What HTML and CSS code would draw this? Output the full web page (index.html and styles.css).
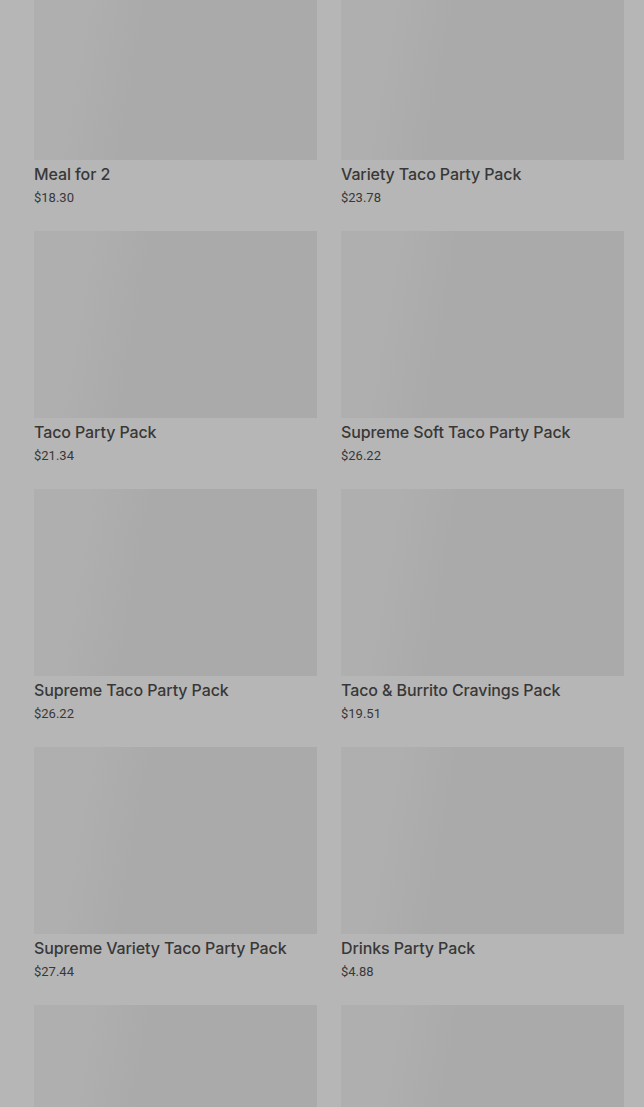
FILE: index.html
```html
<!DOCTYPE html>
<html lang="en">
<head>
  <meta charset="UTF-8" />
  <meta name="viewport" content="width=device-width, initial-scale=1.0"/>
  <title>Party Packs</title>
  <link rel="stylesheet" href="styles.css">
</head>
<body>

  <div class="grid">
    <div class="card">
      <div class="thumb"></div>
      <div class="title">Meal for 2</div>
      <div class="price">$18.30</div>
    </div>
    <div class="card">
      <div class="thumb"></div>
      <div class="title">Variety Taco Party Pack</div>
      <div class="price">$23.78</div>
    </div>
    <div class="card">
      <div class="thumb"></div>
      <div class="title">Taco Party Pack</div>
      <div class="price">$21.34</div>
    </div>
    <div class="card">
      <div class="thumb"></div>
      <div class="title">Supreme Soft Taco Party Pack</div>
      <div class="price">$26.22</div>
    </div>
    <div class="card">
      <div class="thumb"></div>
      <div class="title">Supreme Taco Party Pack</div>
      <div class="price">$26.22</div>
    </div>
    <div class="card">
      <div class="thumb"></div>
      <div class="title">Taco &amp; Burrito Cravings Pack</div>
      <div class="price">$19.51</div>
    </div>
    <div class="card">
      <div class="thumb"></div>
      <div class="title">Supreme Variety Taco Party Pack</div>
      <div class="price">$27.44</div>
    </div>
    <div class="card">
      <div class="thumb"></div>
      <div class="title">Drinks Party Pack</div>
      <div class="price">$4.88</div>
    </div>
    <div class="card">
      <div class="thumb"></div>
      <div class="title">&nbsp;</div>
      <div class="price">&nbsp;</div>
    </div>
    <div class="card">
      <div class="thumb"></div>
      <div class="title">&nbsp;</div>
      <div class="price">&nbsp;</div>
    </div>
  </div>

</body>
</html>
```

FILE: styles.css
```css
html, body {
  height: 100%;
  overflow: hidden;
}
body {
  margin: 0;
  background: #b6b6b6;
  font-family: Roboto, "Liberation Sans", sans-serif;
  color: #383838;
}
.grid {
  display: grid;
  grid-template-columns: 283px 283px;
  column-gap: 24px;
  row-gap: 25px;
  padding: 0 20px 0 34px;
  margin-top: -27px;
}
.thumb {
  height: 187px;
  background: linear-gradient(100deg, #afafaf 0%, #afafaf 18%, #aaaaaa 38%, #aaaaaa 100%);
}
.title {
  font-family: Inter, Roboto, sans-serif;
  font-size: 16px;
  font-weight: 500;
  line-height: 20px;
  margin-top: 4px;
  letter-spacing: -0.1px;
}
.price {
  font-size: 13px;
  line-height: 16px;
  margin-top: 6px;
}
```
